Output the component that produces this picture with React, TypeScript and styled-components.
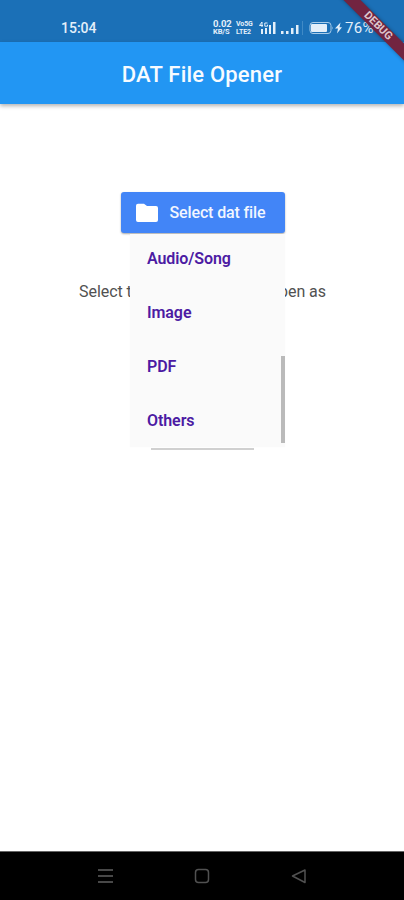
import React from 'react';
import styled, { createGlobalStyle } from 'styled-components';

const GlobalStyle = createGlobalStyle`
  * { box-sizing: border-box; }
  body { margin: 0; background: #fff; font-family: Roboto, "Liberation Sans", sans-serif; }
`;

const Screen = styled.div`
  position: relative;
  width: 404px;
  height: 900px;
  display: flex;
  flex-direction: column;
  overflow: hidden;
  background: #fff;
`;

const StatusBar = styled.header`
  height: 42px;
  flex: none;
  display: flex;
  align-items: center;
  padding: 14px 0 0 61px;
  background: #1b70b7;
  color: #e3effa;
`;

const Clock = styled.time`
  width: 152px;
  font-size: 14px;
  line-height: 16px;
  font-weight: 500;
`;

const Stat = styled.div<{ $width: number }>`
  width: ${p => p.$width}px;
  display: flex;
  flex-direction: column;
  font-weight: 700;
  white-space: nowrap;
`;

const StatLine = styled.span<{ $size: number }>`
  font-size: ${p => p.$size}px;
  line-height: 8px;
  letter-spacing: -0.1px;
`;

const StatusIcon = styled.svg`
  flex: none;
  display: block;
`;

const Battery = styled.span`
  margin-left: 3px;
  font-size: 15px;
  line-height: 16px;
  letter-spacing: 0.3px;
`;

const AppBar = styled.div`
  height: 62px;
  flex: none;
  display: flex;
  align-items: center;
  justify-content: center;
  padding-top: 3px;
  background: #2296f3;
  box-shadow: 0 2px 4px rgba(0, 0, 0, 0.3);
`;

const Title = styled.h1`
  margin: 0;
  color: #f7fbff;
  font-size: 22px;
  line-height: 26px;
  font-weight: 500;
  letter-spacing: 0.2px;
`;

const Content = styled.main`
  flex: 1;
  display: flex;
  flex-direction: column;
  align-items: center;
  padding: 88px 0 0 1px;
`;

const SelectButton = styled.button`
  width: 164px;
  height: 41px;
  display: flex;
  align-items: center;
  gap: 10px;
  padding: 0 0 0 13px;
  border: 0;
  border-radius: 3px;
  background: #4285f7;
  color: #f1f6ff;
  font: 500 16px/20px Roboto, sans-serif;
  letter-spacing: -0.13px;
  white-space: nowrap;
  box-shadow: 0 1px 2px rgba(0, 0, 0, 0.35);
`;

const Picker = styled.section`
  position: relative;
  width: 247px;
  height: 217px;
  display: flex;
  flex-direction: column;
  align-items: center;
  justify-content: space-between;
  padding-top: 49px;
`;

const Prompt = styled.p`
  margin: 0;
  width: 100%;
  display: flex;
  justify-content: space-between;
  color: #515151;
  font-size: 16px;
  line-height: 20px;
  letter-spacing: -0.05px;
  white-space: nowrap;
`;

const Underline = styled.div`
  width: 103px;
  height: 2px;
  background: #d0d0d0;
`;

const Menu = styled.div`
  position: absolute;
  top: 1px;
  left: 51px;
  width: 155px;
  height: 213px;
  overflow: hidden;
  background: #fafafa;
  box-shadow: 0 0 2px rgba(0, 0, 0, 0.025);
`;

const MenuList = styled.ul`
  margin: -3px 0 0;
  padding: 0;
  list-style: none;
`;

const MenuItem = styled.li`
  height: 54px;
  display: flex;
  align-items: center;
  padding-left: 17px;
  color: #4c1ba3;
  font-size: 16px;
  font-weight: 600;
  letter-spacing: -0.08px;
`;

const ScrollThumb = styled.div`
  position: absolute;
  right: 0;
  bottom: 4px;
  width: 4px;
  height: 87px;
  background: #bababa;
`;

const NavBar = styled.nav`
  height: 49px;
  flex: none;
  display: flex;
  align-items: center;
  justify-content: space-between;
  padding: 0 97px;
  border-top: 1px solid #656565;
  background: #000;
`;

const DebugBanner = styled.div`
  position: absolute;
  top: 20px;
  left: 317.5px;
  width: 120px;
  height: 12px;
  transform: rotate(45deg);
  background: #722440;
  color: #dfc5cc;
  font-size: 11px;
  line-height: 12px;
  font-weight: 700;
  text-align: center;
  box-shadow: 0 0 4px rgba(0, 0, 0, 0.35);
`;

const menuItems = ['Audio/Song', 'Image', 'PDF', 'Others'];

export default function App() {
  return (
    <>
      <GlobalStyle />
      <Screen>
        <StatusBar>
          <Clock>15:04</Clock>
          <Stat $width={23}>
            <StatLine $size={9.5}>0.02</StatLine>
            <StatLine $size={7.5}>KB/S</StatLine>
          </Stat>
          <Stat $width={22}>
            <StatLine $size={7}>Vo5G</StatLine>
            <StatLine $size={7}>LTE2</StatLine>
          </Stat>
          <StatusIcon width="84" height="14" viewBox="0 0 84 14" fill="currentColor">
            <path d="M4 1 L1.5 4.5 H5 M4 1 V6 M9.5 2 H6.8 V5.2 H9.5 V3.7" fill="none" stroke="currentColor" />
            <path d="M3 8h2v5H3zM7 7h2v6H7zM11 4h2v9h-2zM15 1h2.5v12H15z" />
            <path d="M23 10h2.5v3H23zM28 10h2.5v3H28zM33 7h2.5v6H33zM38 4h2.5v9H38z" />
            <path d="M44.5 0v14" stroke="#408ac6" />
            <rect x="52" y="1.5" width="21" height="11" rx="3" fill="none" stroke="#a9cce9" />
            <rect x="53" y="3" width="16" height="8" rx="1" />
            <path d="M74.3 5.2q1 1.8 0 3.6z" />
            <path d="M82.5 1.5l-5.5 6h3l-1 5 5-6.3h-2.5z" />
          </StatusIcon>
          <Battery>76%</Battery>
        </StatusBar>
        <AppBar>
          <Title>DAT File Opener</Title>
        </AppBar>
        <Content>
          <SelectButton>
            <svg width="26" height="22" viewBox="0 0 26 22" fill="#fff">
              <path d="M4 1.8h6l3 2.3h9q2 0 2 2v12q0 2-2 2H4q-2 0-2-2V3.8q0-2 2-2z" />
            </svg>
            Select dat file
          </SelectButton>
          <Picker>
            <Prompt>
              <span>Select the type</span>
              <span>to open as</span>
            </Prompt>
            <Underline />
            <Menu>
              <MenuList>
                {menuItems.map(item => <MenuItem key={item}>{item}</MenuItem>)}
              </MenuList>
              <ScrollThumb />
            </Menu>
          </Picker>
        </Content>
        <NavBar>
          <svg width="16" height="16" fill="none" stroke="#484848" strokeWidth="2">
            <path d="M1 2h15M1 8h15M1 14h15" />
          </svg>
          <svg width="16" height="16" fill="none" stroke="#515151" strokeWidth="1.5">
            <rect x="1.5" y="1.5" width="13" height="13" rx="3" />
          </svg>
          <svg width="16" height="16" fill="none" stroke="#515151" strokeWidth="1.5" strokeLinejoin="round">
            <path d="M14 2v12.5L1.5 8z" />
          </svg>
        </NavBar>
        <DebugBanner>DEBUG</DebugBanner>
      </Screen>
    </>
  );
}
